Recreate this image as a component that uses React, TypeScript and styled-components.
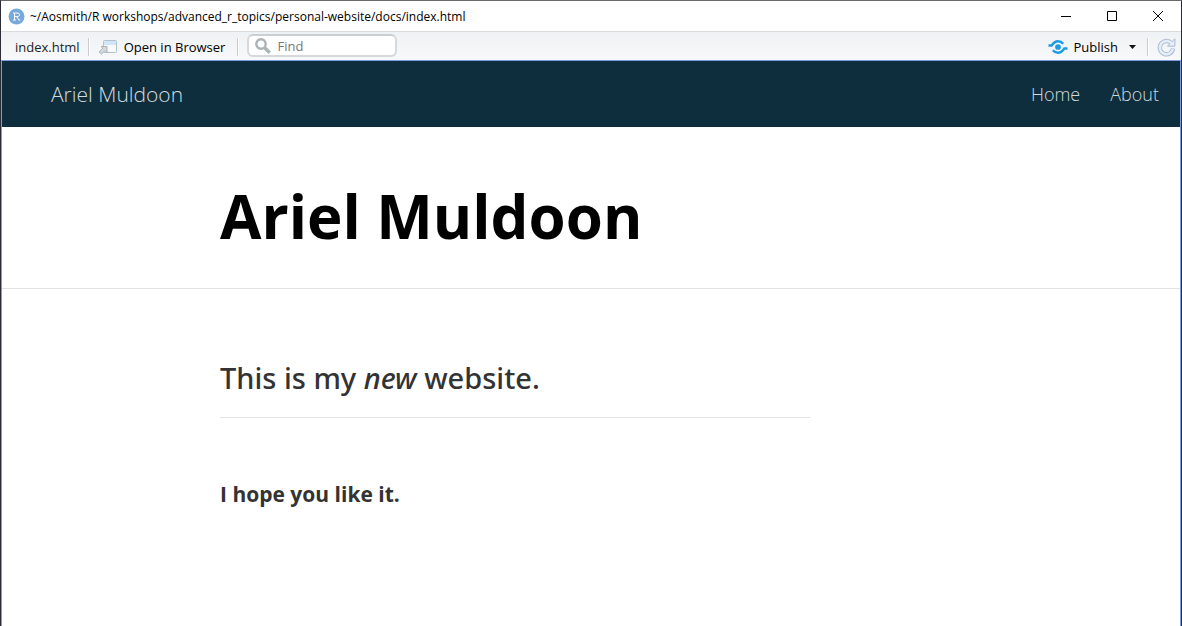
import React from "react";
import styled, { createGlobalStyle } from "styled-components";

const GlobalStyle = createGlobalStyle`
  *, *::before, *::after { box-sizing: border-box; }
  html, body { margin: 0; background: #ffffff; }
  body { font-family: "Open Sans", "Noto Sans", sans-serif; color: #333333; }
  button { font: inherit; color: inherit; background: none; border: 0; padding: 0; }
`;

const Window = styled.div`
  display: flex;
  flex-direction: column;
  min-height: 100vh;
  background: #ffffff;
  border: solid #2b2d36;
  border-width: 1px 1px 0;
  border-top-color: #6b696b;
`;

const TitleBar = styled.header`
  display: flex;
  align-items: center;
  justify-content: space-between;
  height: 31px;
  padding-left: 7px;
  border-bottom: 1px solid #d9dadb;
`;

const WindowTitle = styled.div`
  display: flex;
  align-items: center;
  gap: 5px;
  height: 28px;
  color: #000000;
  font-size: 12px;
  white-space: nowrap;
`;

const WindowControls = styled.div`
  display: flex;
`;

const WindowButton = styled.button`
  display: grid;
  place-items: center;
  width: 46px;
  height: 28px;
`;

const Toolbar = styled.div`
  display: flex;
  align-items: center;
  justify-content: space-between;
  height: 28px;
  padding: 2px 5px 0 14px;
  color: #000000;
  font-size: 13px;
  background: linear-gradient(#eff2f4, #f7f8f9);
`;

const ToolGroup = styled.div`
  display: flex;
  align-items: center;
  gap: 8px;
  height: 26px;
`;

const FileName = styled.span`
  color: #222222;
  line-height: 16px;
`;

const Divider = styled.span`
  width: 2px;
  height: 18px;
  background: linear-gradient(90deg, #c9cdd0 50%, #ffffff 50%);
`;

const ToolButton = styled.button<{ $spaced?: boolean }>`
  display: flex;
  align-items: center;
  gap: 6px;
  height: 24px;
  padding-right: ${({ $spaced }) => ($spaced ? 4 : 0)}px;
  white-space: nowrap;
`;

const FindField = styled.label`
  display: flex;
  align-items: center;
  align-self: flex-start;
  gap: 6px;
  width: 150px;
  height: 23px;
  padding: 0 6px;
  background: #ffffff;
  border: 2px solid #d5d9dc;
  border-top-color: #c9cfd2;
  border-radius: 6px;
`;

const FindInput = styled.input`
  flex: 1;
  min-width: 0;
  padding: 0;
  color: #333333;
  font: inherit;
  line-height: 18px;
  background: none;
  border: 0;
  outline: 0;
  &::placeholder { color: #777777; opacity: 1; }
`;

const Viewer = styled.div`
  flex: 1;
  border: solid #7b9de0;
  border-width: 1px 1px 0;
`;

const SiteNav = styled.nav`
  display: flex;
  align-items: center;
  justify-content: space-between;
  height: 66px;
  padding: 0 21px 0 49px;
  background: #0f2e3d;
`;

const NavLinks = styled.div`
  display: flex;
  gap: 30px;
`;

const NavLink = styled.a<{ $brand?: boolean }>`
  color: #d3dade;
  font-size: ${({ $brand }) => ($brand ? 21 : 18)}px;
  font-weight: 300;
  line-height: 30px;
  text-decoration: none;
`;

const Band = styled.section<{ $ruled?: boolean }>`
  display: grid;
  grid-template-columns: 218px minmax(0, 590px) 1fr;
  border-bottom: ${({ $ruled }) => ($ruled ? "1px solid #e2e2e2" : "0")};
  & > * { grid-column: 2; }
`;

const PageTitle = styled.h1`
  margin: 0;
  padding: 53px 0 36px;
  color: #000000;
  font-size: 60px;
  font-weight: 700;
  line-height: 72px;
  white-space: nowrap;
`;

const Lead = styled.h2`
  margin: 69px 0 0;
  padding-bottom: 19px;
  border-bottom: 1px solid #e2e2e2;
  font-family: "Noto Sans", "Open Sans", sans-serif;
  font-size: 29px;
  font-weight: 500;
  line-height: 40px;
`;

const Note = styled.p`
  margin: 60px 0 0;
  font-size: 21px;
  font-weight: 700;
  line-height: 32px;
`;

const RLogo = () => (
  <svg width="17" height="17" viewBox="0 0 17 17" aria-hidden="true">
    <circle cx="8.5" cy="8.5" r="8" fill="#75aadb" />
    <path
      d="M5 5h4.2c1.5 0 2.3.7 2.3 1.8S10.700 8.600 9.200 8.600H6.500M6.500 5v7M5 12h3M8.800 8.700l2 3.300h1.400"
      fill="none"
      stroke="#ffffff"
      strokeWidth="1"
    />
  </svg>
);

const OpenWindowIcon = () => (
  <svg width="20" height="16" viewBox="0 0 20 16" aria-hidden="true">
    <rect x="5.500" y="1.500" width="13" height="12" rx="1" fill="#f7f9fa" stroke="#b4c0c8" />
    <path d="M6 2h12v4H6z" fill="#cfe6f8" />
    <path d="M1 13 4.800 9.200 3 7.500h6v6l-1.900-1.900L3.600 15z" fill="#d5dade" stroke="#9aa6ae" strokeWidth=".8" />
  </svg>
);

const SearchIcon = () => (
  <svg width="16" height="16" viewBox="0 0 16 16" fill="none" stroke="#abb3b7" aria-hidden="true">
    <circle cx="6" cy="6" r="4.700" strokeWidth="2.400" />
    <path d="m9.700 9.700 5 5" strokeWidth="3.400" />
  </svg>
);

const PublishIcon = () => (
  <svg width="20" height="16" viewBox="0 0 21 16" fill="none" stroke="#1c9be6" aria-hidden="true">
    <circle cx="10.500" cy="8" r="3" fill="#1c9be6" stroke="none" />
    <path d="M.5 6.500h3.300C5.800 3.300 8 1.900 10.500 1.900c2.200 0 4 .9 5.400 2.600" strokeWidth="2.600" />
    <path d="M20.500 9.500h-3.300c-2 3.200-4.200 4.600-6.700 4.600-2.200 0-4-.9-5.400-2.600" strokeWidth="2.600" />
  </svg>
);

const RefreshIcon = () => (
  <svg width="19" height="19" viewBox="0 0 19 19" fill="none" aria-hidden="true">
    <path d="M14.300 5.200A6.600 6.600 0 1 0 16 10.500" stroke="#a9bad0" strokeWidth="4.400" />
    <path d="M17.900.8v7.400h-7.400z" fill="#e4edf8" stroke="#a9bad0" strokeLinejoin="round" />
    <path d="M14.800 5.700A6.600 6.600 0 1 0 15.900 11" stroke="#e4edf8" strokeWidth="2.600" />
  </svg>
);

export default function App() {
  return (
    <>
      <GlobalStyle />
      <Window>
        <TitleBar>
          <WindowTitle>
            <RLogo />
            <span>~/Aosmith/R workshops/advanced_r_topics/personal-website/docs/index.html</span>
          </WindowTitle>
          <WindowControls>
            <WindowButton type="button" aria-label="Minimize">
              <svg width="10" height="11" viewBox="0 0 10 11"><path d="M0 5.500h10" stroke="#000000" /></svg>
            </WindowButton>
            <WindowButton type="button" aria-label="Maximize">
              <svg width="10" height="10" viewBox="0 0 10 10"><path d="M.5.5h9v9h-9z" fill="none" stroke="#000000" /></svg>
            </WindowButton>
            <WindowButton type="button" aria-label="Close">
              <svg width="10" height="10" viewBox="0 0 10 10"><path d="m0 0 10 10M10 0 0 10" stroke="#000000" /></svg>
            </WindowButton>
          </WindowControls>
        </TitleBar>

        <Toolbar>
          <ToolGroup>
            <FileName>index.html</FileName>
            <Divider />
            <ToolButton type="button" $spaced>
              <OpenWindowIcon />
              Open in Browser
            </ToolButton>
            <Divider />
            <FindField>
              <SearchIcon />
              <FindInput type="text" placeholder="Find" aria-label="Find" />
            </FindField>
          </ToolGroup>
          <ToolGroup>
            <ToolButton type="button">
              <PublishIcon />
              Publish
            </ToolButton>
            <ToolButton type="button" aria-label="Publish options">
              <svg width="13" height="4" viewBox="0 0 13 4"><path d="M3 0h7L6.500 4z" fill="#111111" /></svg>
            </ToolButton>
            <Divider />
            <ToolButton type="button" aria-label="Refresh">
              <RefreshIcon />
            </ToolButton>
          </ToolGroup>
        </Toolbar>

        <Viewer>
          <SiteNav>
            <NavLink href="#" $brand>Ariel Muldoon</NavLink>
            <NavLinks>
              <NavLink href="#home">Home</NavLink>
              <NavLink href="#about">About</NavLink>
            </NavLinks>
          </SiteNav>
          <main>
            <Band $ruled>
              <PageTitle>Ariel Muldoon</PageTitle>
            </Band>
            <Band>
              <Lead>This is my <em>new</em> website.</Lead>
              <Note>I hope you like it.</Note>
            </Band>
          </main>
        </Viewer>
      </Window>
    </>
  );
}
